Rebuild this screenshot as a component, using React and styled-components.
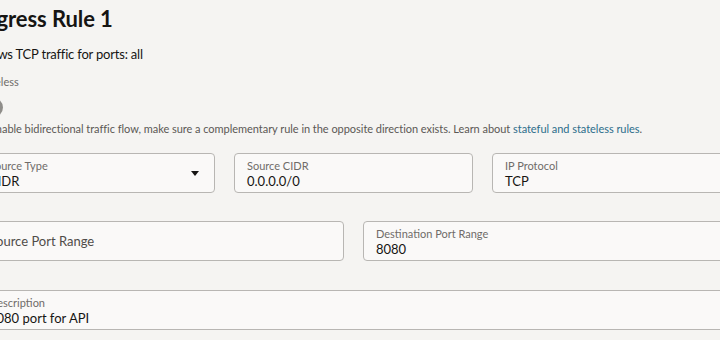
import styled, { createGlobalStyle } from "styled-components";

const GlobalStyle = createGlobalStyle`
  html, body {
    margin: 0;
    padding: 0;
    background: #f5f4f2;
    overflow: hidden;
  }
  body {
    font-family: Lato, "Noto Sans", sans-serif;
    color: #161513;
  }
`

const Page = styled.div`
  width: 755px;
  margin-left: -24px;
  padding-top: 4px;
`

const Title = styled.h2`
  margin: 0;
  font-size: 22px;
  font-weight: 700;
  line-height: 30px;
  letter-spacing: -0.1px;
  padding-left: 2px;
`

const Summary = styled.p`
  margin: 11px 0 0;
  font-size: 13px;
  line-height: 18px;
  letter-spacing: -0.2px;
`

const SmallLabel = styled.div`
  margin-top: 12px;
  font-size: 11px;
  line-height: 14px;
  color: #6f6c69;
`

const Toggle = styled.div`
  margin-top: 9px;
  width: 27px;
  height: 19px;
  border-radius: 10px;
  background: #8f8d8a;
`

const Help = styled.p`
  margin: 5px 0 0;
  font-size: 11px;
  line-height: 14px;
  letter-spacing: -0.04px;
  color: #5b5855;

  a {
    color: #2c6d8b;
    text-decoration: none;
  }
`

const Row = styled.div`
  display: grid;
  grid-template-columns: repeat(${p => p.cols}, 1fr);
  gap: 19px;
  margin-top: ${p => p.top}px;
`

const Field = styled.div`
  position: relative;
  height: 40px;
  box-sizing: border-box;
  border: 1px solid #b8b6b3;
  border-radius: 4px;
  background: #faf9f8;
  padding: 0 12px;
  display: flex;
  flex-direction: column;
  justify-content: ${p => (p.empty ? "center" : "flex-start")};
  padding-top: ${p => (p.empty ? 0 : 5)}px;
`

const FieldLabel = styled.span`
  font-size: 11px;
  line-height: 14px;
  color: #6f6c69;
`

const FieldValue = styled.span`
  font-size: 13px;
  line-height: 17px;
  color: #161513;
`

const Placeholder = styled.span`
  font-size: 13px;
  color: #4f4c49;
`

const Caret = styled.span`
  position: absolute;
  right: 15px;
  top: 17px;
  width: 0;
  height: 0;
  border-left: 4px solid transparent;
  border-right: 4px solid transparent;
  border-top: 5px solid #161513;
`

const InputField = ({ label, value, select }) => (
  <Field>
    <FieldLabel>{label}</FieldLabel>
    <FieldValue>{value}</FieldValue>
    {select && <Caret />}
  </Field>
)

export default function App() {
  return (
    <>
      <GlobalStyle />
      <Page>
        <Title>Ingress Rule 1</Title>
        <Summary>Allows TCP traffic for ports: all</Summary>
        <SmallLabel>Stateless</SmallLabel>
        <Toggle />
        <Help>
          To enable bidirectional traffic flow, make sure a complementary rule in the opposite
          direction exists. Learn about <a href="#">stateful and stateless rules</a>.
        </Help>
        <Row cols={3} top={17}>
          <InputField label="Source Type" value="CIDR" select />
          <InputField label="Source CIDR" value="0.0.0.0/0" />
          <InputField label="IP Protocol" value="TCP" />
        </Row>
        <Row cols={2} top={28}>
          <Field empty>
            <Placeholder>Source Port Range</Placeholder>
          </Field>
          <InputField label="Destination Port Range" value="8080" />
        </Row>
        <Row cols={1} top={29}>
          <InputField label="Description" value="8080 port for API" />
        </Row>
      </Page>
    </>
  );
}
